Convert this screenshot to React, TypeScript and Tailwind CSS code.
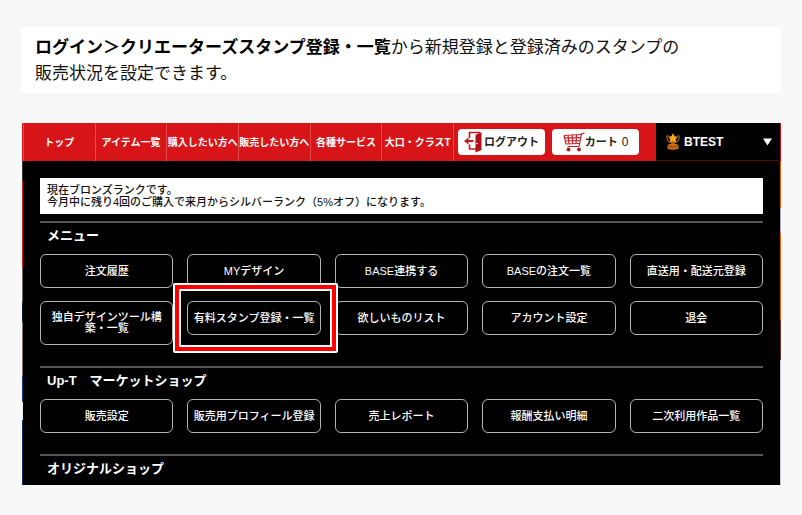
import React from "react";

const navItems = ["トップ", "アイテム一覧", "購入したい方へ", "販売したい方へ", "各種サービス", "大口・クラスT"];

const menuItems = [
  "注文履歴",
  "MYデザイン",
  "BASE連携する",
  "BASEの注文一覧",
  "直送用・配送元登録",
  "独自デザインツール構築・一覧",
  "有料スタンプ登録・一覧",
  "欲しいものリスト",
  "アカウント設定",
  "退会",
];

const marketItems = ["販売設定", "販売用プロフィール登録", "売上レポート", "報酬支払い明細", "二次利用作品一覧"];

const highlighted = "有料スタンプ登録・一覧";

function ExitIcon() {
  return (
    <svg width="18" height="22" viewBox="0 0 18 22" aria-hidden="true">
      <path d="M5.5 7V1.500H16M5.5 13.5V18H12" fill="none" stroke="#c4161c" strokeWidth="1.6" />
      <path d="M11.5 4L17.5 1V19L11.5 21.5Z" fill="#b01217" />
      <circle cx="13" cy="12.5" r="0.8" fill="#fff" />
      <path d="M0 10L4.5 6.5V9H9.5V11H4.5V13.5Z" fill="#c4161c" />
    </svg>
  );
}

function CartIcon() {
  return (
    <svg width="22" height="20" viewBox="0 0 22 20" aria-hidden="true">
      <g fill="none" stroke="#c4232a" strokeWidth="1.2">
        <path d="M21.500 1.200L18.500 1.800L16 14.500H4.5" />
        <path d="M1 3.5L18 2.500M1 3.5L3 12L16.300 11.500M1.6 6.2L17.5 5.6M2.3 9L17 8.5" />
        <path d="M5 3.3L6 11.8M9.2 3.1L9.6 11.7M13.5 2.9L13 11.6" />
      </g>
      <circle cx="5.5" cy="17.500" r="1.9" fill="#b5161c" />
      <circle cx="16" cy="17.500" r="1.9" fill="#b5161c" />
    </svg>
  );
}

function TrophyIcon() {
  return (
    <svg width="14" height="17" viewBox="0 0 14 17" aria-hidden="true">
      <path d="M3 3H0.8C0.8 7 2 9 4.5 9.4M11 3H13.2C13.2 7 12 9 9.500 9.4" fill="none" stroke="#a8641a" strokeWidth="1.1" />
      <path d="M3.500 5H10.5L9.500 9.500L8.300 11H5.700L4.500 9.500Z" fill="#a8641a" />
      <path d="M7 0L8.500 3.300L12 3.700L9.400 6L10.100 9.500L7 7.800L3.900 9.500L4.600 6L2 3.700L5.500 3.300Z" fill="#fba81c" />
      <path d="M3 11H11L12.500 12.500V16Q7 17.500 1.500 16V12.500Z" fill="#c96a1b" />
      <path d="M2.500 13.300Q7 14.400 11.500 13.300" fill="none" stroke="#7c3a0c" strokeWidth="0.8" />
    </svg>
  );
}

function MenuGrid({ items }: { items: string[] }) {
  return (
    <ul className="grid grid-cols-5 items-start gap-x-[14px] gap-y-[13px]">
      {items.map((label) => (
        <li key={label} className="relative">
          <a
            href="#"
            className="flex min-h-[34px] items-center justify-center rounded-md border border-[#b4b4b4] px-[5px] py-[10px] text-center text-[11px] leading-[11px] font-medium text-white"
          >
            {label}
          </a>
          {label === highlighted && (
            <span className="pointer-events-none absolute -top-[18px] -right-[17px] -bottom-[18px] -left-[14px] z-10 rounded-[2px] border-2 border-white">
              <span className="block h-full border-4 border-[#ff0000]">
                <span className="block h-full border-2 border-white" />
              </span>
            </span>
          )}
        </li>
      ))}
    </ul>
  );
}

function Heading({ children }: { children: React.ReactNode }) {
  return (
    <h2 className="border-t-2 border-[#555555] px-[7px] pt-1 text-[13px] leading-[18px] font-bold text-white">
      {children}
    </h2>
  );
}

export default function App() {
  return (
    <main className="min-h-screen bg-[#f8f8f8] px-[21px] pt-[27px] pb-[30px] font-['Liberation_Sans','Noto_Sans_CJK_JP',sans-serif]">
      <p className="bg-white px-[14px] pt-[6px] pb-2 font-['Noto_Sans_CJK_JP',sans-serif] text-[17px] leading-[26px] text-[#111111]">
        <strong className="text-black">ログイン＞クリエーターズスタンプ登録・一覧</strong>から新規登録と登録済みのスタンプの
        <br />
        販売状況を設定できます。
      </p>

      <div className="mt-[30px] ml-px">
        <header className="flex h-[38px] bg-[#d71518] pl-px">
          <nav className="grid flex-1 grid-cols-6 border-l border-[#e44a4c]">
            {navItems.map((label) => (
              <a
                key={label}
                href="#"
                className="flex items-center justify-center border-r border-[#e44a4c] text-[10px] font-bold whitespace-nowrap text-white"
              >
                {label}
              </a>
            ))}
          </nav>
          <div className="flex items-center gap-[7px] pr-[17px] pl-1 text-[11px] font-bold text-[#222222]">
            <button type="button" className="flex h-[26px] w-[87px] items-center justify-center gap-[2px] rounded bg-white whitespace-nowrap">
              <ExitIcon />
              ログアウト
            </button>
            <button type="button" className="flex h-[26px] w-[87px] items-center justify-center rounded bg-white whitespace-nowrap">
              <CartIcon />
              カート<span className="pl-1 text-[12px] font-normal">0</span>
            </button>
          </div>
          <button
            type="button"
            className="flex w-[125px] items-center gap-1 border-r border-b border-r-[#c01010] border-b-[#5a0808] bg-black pr-2 pl-[10px] text-[12px] font-bold text-white"
          >
            <TrophyIcon />
            BTEST
            <svg className="ml-auto" width="9" height="8" viewBox="0 0 9 8" aria-hidden="true">
              <path d="M0 0.500H9L4.500 7.500Z" fill="#fff" />
            </svg>
          </button>
        </header>

        <div className="flex bg-black">
          <div className="flex w-px flex-col" aria-hidden="true">
            <div className="h-5 bg-[#3a3a34]" />
            <div className="h-[87px] bg-[#d91a1a]" />
            <div className="h-[34px] bg-[#6f6860]" />
            <div className="h-5 bg-[#0c2236]" />
            <div className="h-[54px] bg-[#8a7068]" />
            <div className="h-[26px] bg-[#123a78]" />
            <div className="h-[18px] bg-[#e8e8f0]" />
            <div className="flex-1 bg-[#0d2c5c]" />
          </div>

          <div className="flex-1 px-[17px] pt-[17px]">
            <p className="mb-[7px] bg-white px-[7px] py-[6px] text-[11px] leading-[12px] font-medium text-[#111111]">
              現在ブロンズランクです。
              <br />
              今月中に残り4回のご購入で来月からシルバーランク（5%オフ）になります。
            </p>

            <section className="pb-[21px]">
              <Heading>メニュー</Heading>
              <div className="pt-[9px]">
                <MenuGrid items={menuItems} />
              </div>
            </section>

            <section className="pb-[21px]">
              <Heading>Up-T　マーケットショップ</Heading>
              <div className="pt-[9px]">
                <MenuGrid items={marketItems} />
              </div>
            </section>

            <section className="pb-[7px]">
              <Heading>オリジナルショップ</Heading>
            </section>
          </div>

          <div className="flex w-px flex-col" aria-hidden="true">
            <div className="h-[47px] bg-[#e85a10]" />
            <div className="h-[25px] bg-[#a9a9c4]" />
            <div className="h-[87px] bg-[#f06410]" />
            <div className="h-10 bg-[#6b3430]" />
            <div className="flex-1 bg-[#c4c4dc]" />
          </div>
        </div>
      </div>
    </main>
  );
}
